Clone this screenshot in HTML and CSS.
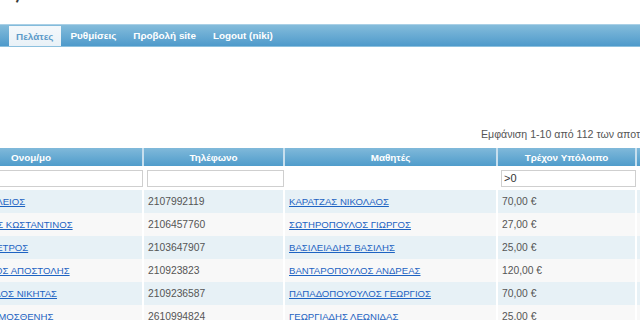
FILE: index.html
```html
<!DOCTYPE html>
<html lang="el">
<head>
<meta charset="utf-8">
<title>Πελάτες</title>
<link rel="stylesheet" href="styles.css">
</head>
<body>
<div class="page">
  <div class="top"><h1 class="title">Πελάτες</h1></div>
  <nav class="nav">
    <a class="tab active" href="#">Πελάτες</a>
    <a class="tab" href="#">Ρυθμίσεις</a>
    <a class="tab" href="#">Προβολή site</a>
    <a class="tab" href="#">Logout (niki)</a>
  </nav>
  <div class="content">
    <div class="summary">Εμφάνιση 1-10 από 112 των αποτελεσμάτων.</div>
    <table class="grid">
      <colgroup>
        <col class="c1"><col class="c2"><col class="c3"><col class="c4"><col class="c5">
      </colgroup>
      <thead>
        <tr class="head">
          <th>Ονομ/μο</th><th>Τηλέφωνο</th><th>Μαθητές</th><th>Τρέχον Υπόλοιπο</th><th>&nbsp;</th>
        </tr>
        <tr class="filters">
          <td><input class="filter" type="text"></td>
          <td><input class="filter" type="text"></td>
          <td></td>
          <td><input class="filter" type="text" value="&gt;0"></td>
          <td></td>
        </tr>
      </thead>
      <tbody>
        <tr class="odd"><td><a href="#">ΚΑΡΑΤΖΑΣ ΒΑΣΙΛΕΙΟΣ</a></td><td>2107992119</td><td><a href="#">ΚΑΡΑΤΖΑΣ ΝΙΚΟΛΑΟΣ</a></td><td>70,00 €</td><td></td></tr>
        <tr class="even"><td><a href="#">ΣΩΤΗΡΟΠΟΥΛΟΣ ΚΩΣΤΑΝΤΙΝΟΣ</a></td><td>2106457760</td><td><a href="#">ΣΩΤΗΡΟΠΟΥΛΟΣ ΓΙΩΡΓΟΣ</a></td><td>27,00 €</td><td></td></tr>
        <tr class="odd"><td><a href="#">ΒΑΣΙΛΕΙΑΔΗΣ ΠΕΤΡΟΣ</a></td><td>2103647907</td><td><a href="#">ΒΑΣΙΛΕΙΑΔΗΣ ΒΑΣΙΛΗΣ</a></td><td>25,00 €</td><td></td></tr>
        <tr class="even"><td><a href="#">ΒΑΝΤΑΡΟΠΟΥΛΟΣ ΑΠΟΣΤΟΛΗΣ</a></td><td>210923823</td><td><a href="#">ΒΑΝΤΑΡΟΠΟΥΛΟΣ ΑΝΔΡΕΑΣ</a></td><td>120,00 €</td><td></td></tr>
        <tr class="odd"><td><a href="#">ΑΝΑΣΤΑΣΟΠΟΥΛΟΣ ΝΙΚΗΤΑΣ</a></td><td>2109236587</td><td><a href="#">ΠΑΠΑΔΟΠΟΥΟΥΛΟΣ ΓΕΩΡΓΙΟΣ</a></td><td>70,00 €</td><td></td></tr>
        <tr class="even"><td><a href="#">ΓΕΩΡΓΙΑΔΗΣ ΔΗΜΟΣΘΕΝΗΣ</a></td><td>2610994824</td><td><a href="#">ΓΕΩΡΓΙΑΔΗΣ ΛΕΩΝΙΔΑΣ</a></td><td>25,00 €</td><td></td></tr>
      </tbody>
    </table>
  </div>
</div>
</body>
</html>
```

FILE: styles.css
```css
html, body {
  margin: 0;
  padding: 0;
  overflow: hidden;
  background: #fff;
}
body {
  font-family: "Liberation Sans", Arial, sans-serif;
  font-size: 10.3px;
  color: #555;
}
.page {
  width: 830px;
  margin-left: -80px;
}
.top {
  height: 24px;
  overflow: hidden;
}
.title {
  width: 88px;
  margin: -28px 0 0 0;
  text-align: right;
  font-size: 28px;
  font-weight: normal;
  color: #3a3a3a;
  line-height: 34px;
  white-space: nowrap;
}
.nav {
  height: 21px;
  display: flex;
  align-items: stretch;
  gap: 3px;
  padding-left: 89px;
  border-top: 1px solid #a9d0e6;
  border-bottom: 1px solid #8cc0de;
  background: linear-gradient(#84bcdb, #4e9acb);
}
.tab {
  display: flex;
  align-items: center;
  padding: 0 7px;
  color: #fff;
  font-family: "Liberation Sans", Arial, sans-serif;
  font-weight: bold;
  font-size: 9.9px;
  text-decoration: none;
}
.tab.active {
  background: linear-gradient(#f4f8fb, #e9f1f7);
  color: #5d9bc9;
  margin-top: 1px;
}
.content {
  padding-top: 78px;
}
.summary {
  margin-left: 561px;
  font-size: 10.6px;
  color: #555;
  height: 18px;
  line-height: 18px;
  white-space: nowrap;
}
.grid {
  border-collapse: separate;
  border-spacing: 0;
  table-layout: fixed;
  width: 830px;
  margin-top: 5px;
}
.c1 { width: 224px; }
.c2 { width: 141px; }
.c3 { width: 213px; }
.c4 { width: 139px; }
.c5 { width: 113px; }
.head th {
  height: 18px;
  padding: 0;
  background: linear-gradient(#80b9da, #4f9ccb);
  color: #fff;
  font-weight: bold;
  font-size: 9.9px;
  text-align: center;
  border-right: 2px solid #c7dfee;
}
.filters td {
  height: 24px;
  padding: 0 1px 0 3px;
  vertical-align: middle;
}
.filter {
  box-sizing: border-box;
  width: 100%;
  height: 17px;
  border: 1px solid #cfcfcf;
  padding: 0 2px;
  font-family: "Liberation Sans", Arial, sans-serif;
  font-size: 11px;
  color: #333;
  display: block;
}
tbody td {
  height: 23px;
  padding: 0 0 0 4px;
  white-space: nowrap;
  overflow: hidden;
  border-right: 2px solid #fff;
}
tr.odd td { background: #e7f1f6; }
tr.even td { background: #f8f8f8; }
tbody a {
  color: #1d63c2;
  font-size: 9.6px;
  text-decoration: underline;
}
```
